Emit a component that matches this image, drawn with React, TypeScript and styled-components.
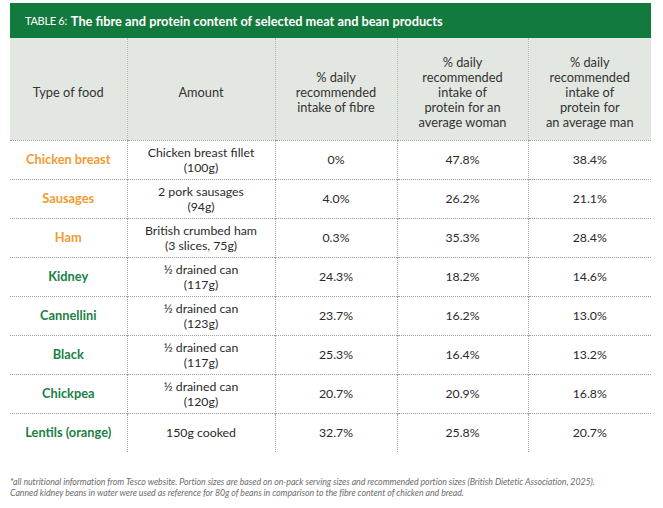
import React from 'react';
import styled, { createGlobalStyle } from 'styled-components';

const GlobalStyle = createGlobalStyle`
  body {
    margin: 0;
    background: #ffffff;
    font-family: Lato, "Open Sans", sans-serif;
  }
`;

type Row = {
  food: string;
  tone: 'meat' | 'bean';
  amount: string[];
  fibre: string;
  woman: string;
  man: string;
};

const rows: Row[] = [
  { food: 'Chicken breast', tone: 'meat', amount: ['Chicken breast fillet', '(100g)'], fibre: '0%', woman: '47.8%', man: '38.4%' },
  { food: 'Sausages', tone: 'meat', amount: ['2 pork sausages', '(94g)'], fibre: '4.0%', woman: '26.2%', man: '21.1%' },
  { food: 'Ham', tone: 'meat', amount: ['British crumbed ham', '(3 slices, 75g)'], fibre: '0.3%', woman: '35.3%', man: '28.4%' },
  { food: 'Kidney', tone: 'bean', amount: ['½ drained can', '(117g)'], fibre: '24.3%', woman: '18.2%', man: '14.6%' },
  { food: 'Cannellini', tone: 'bean', amount: ['½ drained can', '(123g)'], fibre: '23.7%', woman: '16.2%', man: '13.0%' },
  { food: 'Black', tone: 'bean', amount: ['½ drained can', '(117g)'], fibre: '25.3%', woman: '16.4%', man: '13.2%' },
  { food: 'Chickpea', tone: 'bean', amount: ['½ drained can', '(120g)'], fibre: '20.7%', woman: '20.9%', man: '16.8%' },
  { food: 'Lentils (orange)', tone: 'bean', amount: ['150g cooked'], fibre: '32.7%', woman: '25.8%', man: '20.7%' }
];

const Page = styled.div`
  padding: 3px 12px 0 10px;
  width: 641px;
`;

const TitleBar = styled.div`
  display: flex;
  align-items: center;
  height: 35px;
  padding-left: 15px;
  background: #137a3d;
  color: #ffffff;
  font-size: 12.8px;
  font-weight: 700;
`;

const TitleTag = styled.span`
  font-weight: 400;
  font-size: 11px;
  margin-right: 4px;
  letter-spacing: -0.3px;
`;

const Table = styled.table`
  width: 641px;
  border-collapse: collapse;
  table-layout: fixed;
  font-size: 12px;
  color: #2a2a2a;
`;

const HeadRow = styled.tr`
  background: #e3e7e1;
  height: 102px;
`;

const HeadCell = styled.th`
  font-weight: 400;
  font-size: 12.8px;
  line-height: 15px;
  color: #333333;
  padding: 8px 4px 0;
  text-align: center;
  vertical-align: middle;
  border-bottom: 1px dotted #9c9c9c;
  & + & {
    border-left: 1px dotted #b8b8b8;
  }
`;

const BodyRow = styled.tr`
  height: 39px;
  & + & td {
    border-top: 1px dotted #9c9c9c;
  }
`;

const Cell = styled.td`
  text-align: center;
  vertical-align: middle;
  line-height: 15px;
  padding: 0 4px;
  font-size: 12.3px;
  & + & {
    border-left: 1px dotted #a8a8a8;
  }
`;

const FoodCell = styled(Cell)<{ $tone: 'meat' | 'bean' }>`
  font-weight: 700;
  font-size: 12.8px;
  color: ${(p) => (p.$tone === 'meat' ? '#f39a32' : '#1b7f45')};
`;

const Footnote = styled.p`
  margin: 24px 0 0;
  font-style: italic;
  font-size: 8.8px;
  line-height: 11px;
  color: #6d6d6d;
  letter-spacing: -0.05px;
`;

export default function App() {
  return (
    <>
      <GlobalStyle />
      <Page>
        <TitleBar>
          <TitleTag>TABLE 6:</TitleTag>
          The fibre and protein content of selected meat and bean products
        </TitleBar>
        <Table>
          <colgroup>
            <col style={{ width: 117 }} />
            <col style={{ width: 148 }} />
            <col style={{ width: 122 }} />
            <col style={{ width: 131 }} />
            <col style={{ width: 123 }} />
          </colgroup>
          <thead>
            <HeadRow>
              <HeadCell>Type of food</HeadCell>
              <HeadCell>Amount</HeadCell>
              <HeadCell>
                % daily
                <br />
                recommended
                <br />
                intake of fibre
              </HeadCell>
              <HeadCell>
                % daily
                <br />
                recommended
                <br />
                intake of
                <br />
                protein for an
                <br />
                average woman
              </HeadCell>
              <HeadCell>
                % daily
                <br />
                recommended
                <br />
                intake of
                <br />
                protein for
                <br />
                an average man
              </HeadCell>
            </HeadRow>
          </thead>
          <tbody>
            {rows.map((r) => (
              <BodyRow key={r.food}>
                <FoodCell $tone={r.tone}>{r.food}</FoodCell>
                <Cell>
                  {r.amount.map((line, i) => (
                    <React.Fragment key={line}>
                      {i > 0 && <br />}
                      {line}
                    </React.Fragment>
                  ))}
                </Cell>
                <Cell>{r.fibre}</Cell>
                <Cell>{r.woman}</Cell>
                <Cell>{r.man}</Cell>
              </BodyRow>
            ))}
          </tbody>
        </Table>
        <Footnote>
          *all nutritional information from Tesco website. Portion sizes are based on on-pack serving sizes and
          recommended portion sizes (British Dietetic Association, 2025).
          <br />
          Canned kidney beans in water were used as reference for 80g of beans in comparison to the fibre content of
          chicken and bread.
        </Footnote>
      </Page>
    </>
  );
}
